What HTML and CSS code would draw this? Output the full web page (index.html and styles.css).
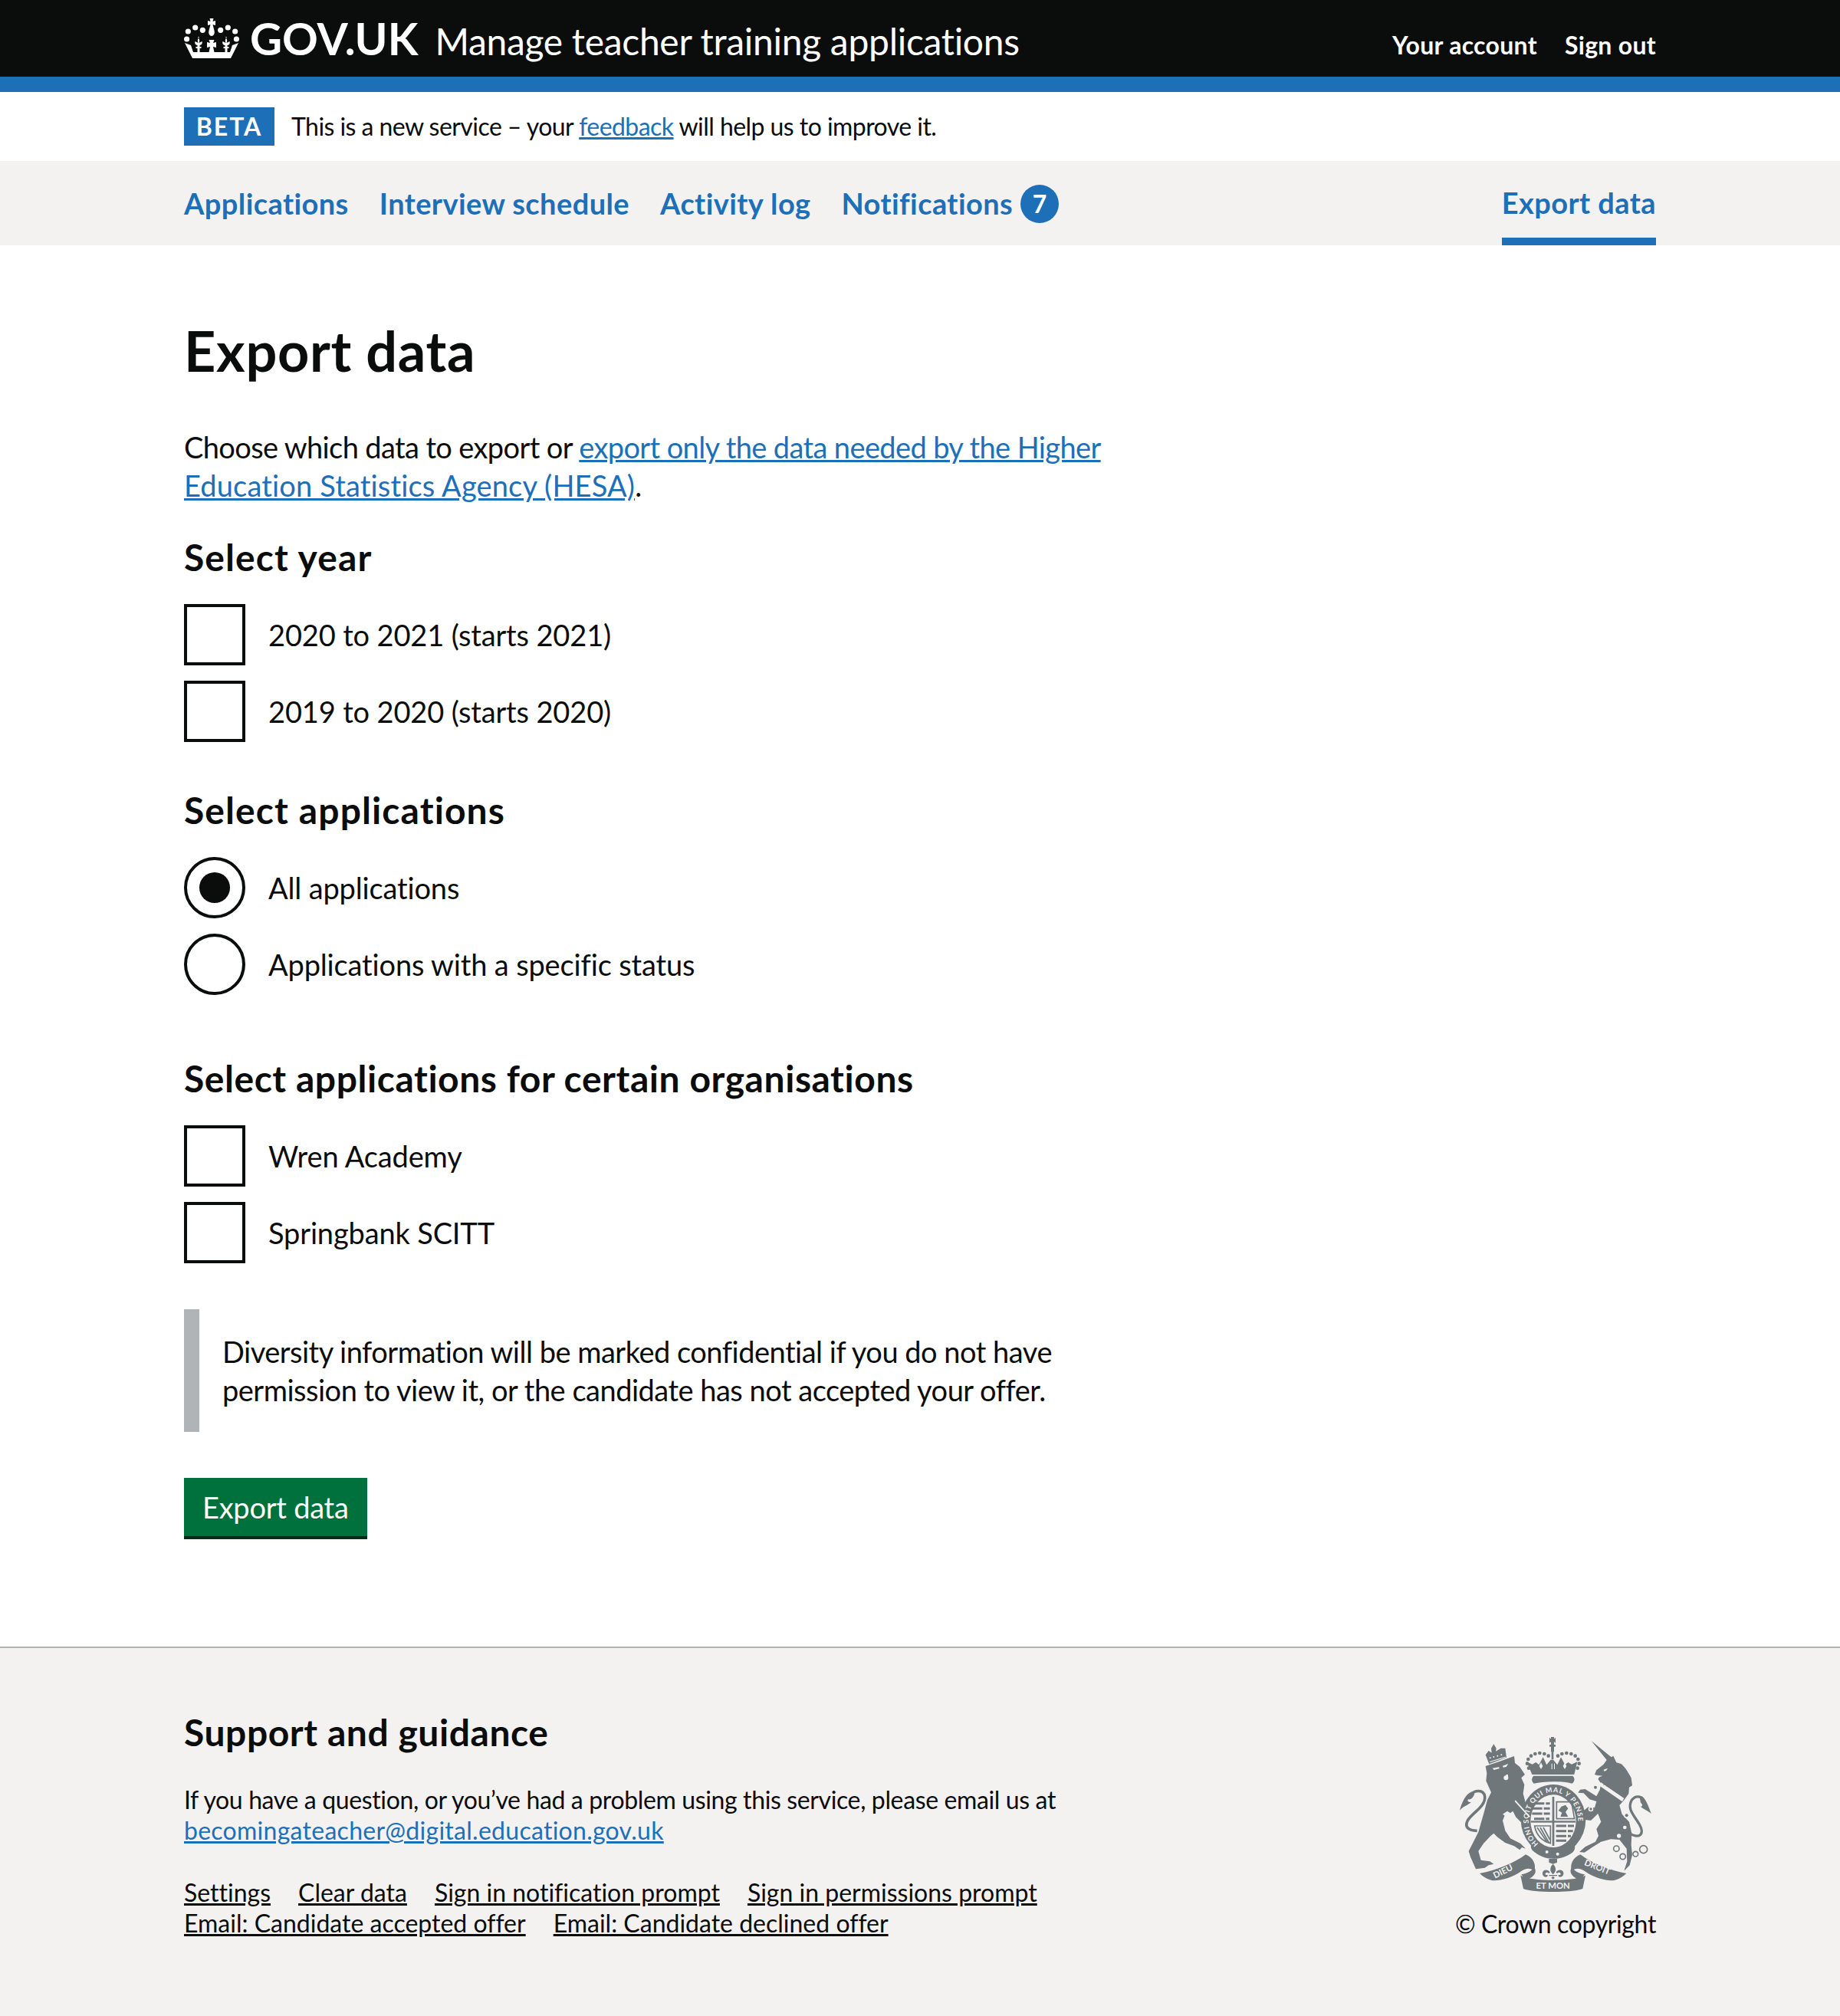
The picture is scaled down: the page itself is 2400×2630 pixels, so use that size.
FILE: index.html
```html
<!DOCTYPE html>
<html lang="en">
<head>
    <meta charset="UTF-8">
    <title>Export data - Manage teacher training applications - GOV.UK</title>
    <link rel="stylesheet" href="styles.css">
</head>
<body>
<!-- Header -->
<header class="header">
    <div class="width-container header-inner">
        <a class="logo" href="#">
            <svg class="logo-crown" viewBox="0 0 72 52" aria-hidden="true">
                <defs>
                    <path id="fleur" d="M0 24c2 3 3 5 1.500 8l4-2c1 3-1 5-3 5v2h2v2h-2v5h-3v-5h-2v-2h2v-2c-2 0-4-2-3-5l4 2c-1.500-3-.5-5 1.500-8z"/>
                </defs>
                <g fill="#fff">
                    <path d="M33.500 0h5l-1 4 3.500-1v6l-3.500-1 2 8c1 4-1 7-3.500 7s-4.500-3-3.500-7l2-8-3.500 1V3l3.500 1z"/>
                    <circle cx="5.300" cy="17" r="3.600"/><circle cx="14.700" cy="12" r="3.600"/><circle cx="24.300" cy="15.300" r="3.600"/>
                    <circle cx="47.700" cy="15.300" r="3.600"/><circle cx="57.300" cy="12" r="3.600"/><circle cx="66.700" cy="17" r="3.600"/>
                    <circle cx="3.600" cy="27" r="3.600"/><circle cx="68.400" cy="27" r="3.600"/>
                    <path d="M1 32l8 3 3 9h48l3-9 8-3-10 20H11z"/>
                    <use href="#fleur" x="18"/><use href="#fleur" x="54"/>
                    <path d="M32.500 28h7l-1.500 4 4-1v7l-4-1 1.500 7h-7l1.500-7-4 1v-7l4 1z"/>
                </g>
            </svg>
            <span class="logo-text">GOV.UK</span>
        </a>
        <a class="service-name" href="#">Manage teacher training applications</a>
        <nav class="account-nav">
            <a href="#">Your account</a>
            <a href="#">Sign out</a>
        </nav>
    </div>
</header>

<!-- Phase banner -->
<div class="width-container phase-banner">
    <strong class="tag">BETA</strong>
    <span class="phase-text">This is a new service – your <a class="link" href="#">feedback</a> will help us to improve it.</span>
</div>

<!-- Primary navigation -->
<nav class="primary-nav">
    <div class="width-container primary-nav-inner">
        <a class="nav-item" href="#">Applications</a>
        <a class="nav-item" href="#">Interview schedule</a>
        <a class="nav-item" href="#">Activity log</a>
        <a class="nav-item" href="#">Notifications <span class="count">7</span></a>
        <a class="nav-item nav-item-current" href="#">Export data</a>
    </div>
</nav>

<main class="width-container main">
    <h1 class="heading-xl">Export data</h1>
    <p class="body intro">Choose which data to export or <a class="link" href="#">export only the data needed by the Higher <span class="intro-end">Education Statistics Agency (HESA)</span></a>.</p>

    <form>
        <fieldset class="group">
            <legend class="heading-m heading-loose">Select year</legend>
            <label class="choice"><span class="box"></span>2020 to 2021 (starts 2021)</label>
            <label class="choice"><span class="box"></span>2019 to 2020 (starts 2020)</label>
        </fieldset>

        <fieldset class="group group-wide">
            <legend class="heading-m heading-loose">Select applications</legend>
            <label class="choice"><span class="radio radio-checked"></span>All applications</label>
            <label class="choice"><span class="radio"></span>Applications with a specific status</label>
        </fieldset>

        <fieldset class="group">
            <legend class="heading-m">Select applications for certain organisations</legend>
            <label class="choice"><span class="box"></span>Wren Academy</label>
            <label class="choice"><span class="box"></span>Springbank SCITT</label>
        </fieldset>

        <div class="inset">Diversity information will be marked confidential if you do not have permission to view it, or the candidate has not accepted your offer.</div>

        <button class="button" type="button">Export data</button>
    </form>
</main>

<!-- Footer -->
<footer class="footer">
    <div class="width-container footer-inner">
        <div class="footer-meta">
            <h2 class="heading-m footer-heading">Support and guidance</h2>
            <p class="footer-text">If you have a question, or you’ve had a problem using this service, please email us at <a class="link" href="#">becomingateacher@digital.education.gov.uk</a></p>
            <ul class="footer-links">
                <li><a href="#">Settings</a></li>
                <li><a href="#">Clear data</a></li>
                <li><a href="#">Sign in notification prompt</a></li>
                <li><a href="#">Sign in permissions prompt</a></li>
                <li><a href="#">Email: Candidate accepted offer</a></li>
                <li><a href="#">Email: Candidate declined offer</a></li>
            </ul>
        </div>
        <div class="footer-crest">
            <svg class="crest" viewBox="0 0 810 660" aria-hidden="true">
                <defs>
                    <path id="ring-path" d="M335 436A97 112 0 1 1 451 436"/>
                </defs>
                <g fill="#6f777b">
                    <!-- lion -->
                    <path d="M128 132L180 115L240 93L243 120L262 135L282 165L268 178L280 205L275 240L288 288L312 370L290 375L255 340L235 320L205 320L195 345L205 385L225 415L265 435L285 455L270 450L262 460L240 445L205 432L175 410L160 395L148 405L120 435L100 465L110 500L145 505L160 515L140 520L125 530L90 535L70 490L62 465L80 430L100 390L120 320L135 265L150 235L130 190L133 160Z"/>
                    <path d="M142 124L128 88L140 72L152 80L150 62L160 46L170 62L168 74L188 62L205 62L210 98Z"/>
                    <path d="M75 232C50 240 35 275 27 305C45 285 60 285 72 272C62 275 55 270 60 262C70 265 80 255 85 240Z"/>
                    <path fill="none" stroke="#6f777b" stroke-width="11" d="M95 385C60 385 45 370 58 345C75 315 130 290 125 250C120 222 85 225 70 245"/>

                    <!-- unicorn -->
                    <path d="M542 33L620 97L628 92L640 118L660 124L675 140L684 154L698 178L702 208L690 215L688 240L668 268L652 285L662 320L690 350L700 395L698 440L702 480L692 520L670 542L682 505L680 455L652 420L618 418L580 428L545 450L515 470L495 468L518 448L558 428L570 405L562 378L580 350L568 318L540 345L518 342L505 312L530 292L555 295L562 270L535 262L512 238L490 236L498 224L518 222L562 250L575 225L580 200L568 182L576 172L555 165L562 148L590 125L602 108Z"/>
                    <path d="M730 248C755 250 765 290 777 318C760 305 745 300 735 290C745 290 742 280 735 275Z"/>
                    <path fill="none" stroke="#6f777b" stroke-width="10" d="M690 395C735 420 750 395 730 360C710 325 680 300 700 265C715 245 735 250 745 262"/>
                    <g fill="none" stroke="#6f777b" stroke-width="5">
                        <circle cx="640" cy="455" r="11"/><circle cx="665" cy="486" r="11"/><circle cx="715" cy="476" r="10"/><circle cx="746" cy="458" r="15"/>
                    </g>

                    <!-- crown -->
                    <path d="M378 20l6 6v-8h12v8l6-6v22l-6-6v12h6v8h-6v20h-2v30h-8v-30h-2V56h-6v-8h6V36l-6 6z"/>
                    <path d="M310 165h165l12-50-22 10-14-8-12 10-16-30-14 30-16-20-10 0-16 20-14-30-16 30-12-10-14 8-22-10z"/>
                    <path d="M316 170h153c10 10 8 22-2 30-40-10-110-10-150 0-10-8-10-20-1-30z"/>
                    <g>
                        <circle cx="297" cy="140" r="7"/><circle cx="291" cy="122" r="7"/><circle cx="295" cy="105" r="7"/><circle cx="306" cy="92" r="7"/><circle cx="322" cy="84" r="7"/><circle cx="340" cy="81" r="7"/><circle cx="358" cy="84" r="7"/><circle cx="374" cy="92" r="7"/>
                        <circle cx="488" cy="140" r="7"/><circle cx="494" cy="122" r="7"/><circle cx="490" cy="105" r="7"/><circle cx="479" cy="92" r="7"/><circle cx="463" cy="84" r="7"/><circle cx="445" cy="81" r="7"/><circle cx="427" cy="84" r="7"/><circle cx="411" cy="92" r="7"/>
                    </g>

                    <!-- garter ring and shield -->
                    <ellipse cx="393" cy="342" rx="127" ry="138"/>
                    <ellipse cx="393" cy="347" rx="89" ry="103" fill="#f3f2f1"/>
                    <rect x="389" y="252" width="8" height="192"/>
                    <rect x="305" y="346" width="175" height="7"/>
                    <!-- quarters -->
                    <g stroke="#6f777b" stroke-width="9" stroke-dasharray="40 6">
                        <path d="M318 278h62M310 298h70M310 318h70M318 338h60"/>
                        <path d="M404 366h70M404 386h66M404 406h58M404 424h42"/>
                    </g>
                    <path d="M406 272h58l12 66h-70z" fill="none" stroke="#6f777b" stroke-width="5"/>
                    <path d="M425 290l16-6 10 14-10 14 10 18h-30l6-16-14-8z"/>
                    <path d="M320 366h62v68c-32-8-56-32-62-68z" fill="none" stroke="#6f777b" stroke-width="5"/>
                    <path d="M342 372l34 60M330 372l38 56M354 372l26 48" fill="none" stroke="#6f777b" stroke-width="5"/>
                    <!-- garter buckle -->
                    <path d="M322 470c-18-8-22-30-8-36 16 14 50 30 79 32 30-2 58-14 78-32 12 10 8 34-12 42-20 12-45 20-68 18-28 0-50-10-69-24z"/>

                    <!-- motto scroll -->
                    <path d="M105 552C170 540 240 512 285 478C315 490 328 520 318 542C305 530 285 530 265 545C230 570 170 585 150 578C135 575 118 565 105 552Z"/>
                    <path d="M679 552C614 540 544 512 499 478C469 490 456 520 466 542C479 530 499 530 519 545C554 570 614 585 634 578C649 575 666 565 679 552Z"/>
                    <path d="M265 560C290 572 335 578 392 578C449 578 494 572 519 560L508 612C470 628 314 628 276 612Z"/>
                    <path d="M318 528C336 552 306 572 285 578L268 556C292 552 308 542 318 528ZM466 528C448 552 478 572 499 578L516 556C492 552 476 542 466 528Z"/>
                    <!-- fleur on the scroll -->
                    <path d="M376 495h32v14l-16 6-16-6z"/>
                    <path d="M392 515c10 10 14 22 6 34l-6 7-6-7c-8-12-4-24 6-34z"/>
                    <path d="M380 548c-6-12-22-12-28-2-4 10 2 20 12 20 6 0 9-5 6-9-4 3-8 0-8-3 0-6 8-8 14-2zM404 548c6-12 22-12 28-2 4 10-2 20-12 20-6 0-9-5-6-9 4 3 8 0 8-3 0-6-8-8-14-2z"/>
                    <path d="M376 558h32v4h-32zM392 563l7 6-7 6-7-6z"/>
                </g>
                <g fill="#f3f2f1">
                    <!-- lion face and paw gaps -->
                    <circle cx="208" cy="178" r="9"/>
                    <path d="M155 140l25-4 3 5-22 6zM195 131l22-8-8 12-12 2zM208 165h8v14h-8z"/>
                    <path d="M245 265l58 65-5 2-56-62z"/>
                    <path d="M195 320l18-12 12 8 10-8 12 24-30 4z"/>
                    <!-- lion crown details -->
                    <circle cx="146" cy="100" r="3"/><circle cx="160" cy="96" r="3"/><circle cx="175" cy="92" r="3"/><circle cx="190" cy="88" r="3"/>
                    <path d="M144 114l62-19 1 3-62 19z"/>
                    <!-- unicorn face, collar, spots and loops -->
                    <path d="M590 146l16-6-6 10-8 2zM566 168l20 2-10 4z"/>
                    <path d="M580 196l90 62-7 13-92-64z"/>
                    <circle cx="680" cy="325" r="11"/><circle cx="558" cy="215" r="11"/><circle cx="540" cy="300" r="10"/>
                    <circle cx="673" cy="372" r="7"/><circle cx="650" cy="405" r="8"/>
                    <!-- crown details -->
                    <path d="M345 118l7 14-7 12-7-12zM438 118l7 14-7 12-7-12zM386 122h3v22h-3zM396 122h3v22h-3z"/>
                    <!-- buckle studs -->
                    <circle cx="368" cy="468" r="6"/><circle cx="410" cy="476" r="6"/>
                </g>
                <g fill="#6f777b">
                    <circle cx="680" cy="325" r="6"/><circle cx="558" cy="215" r="6"/><circle cx="540" cy="300" r="5"/>
                    <path d="M590 208l6-8 4 12 6-7 4 12 6-7 4 12 6-7 4 12 6-7 4 12 6-7 4 12-4 3-58-38z"/>
                </g>
                <g class="crest-text" fill="#f3f2f1">
                    <text class="ring-text"><textPath href="#ring-path">HONI SOIT QUI MAL Y PENSE</textPath></text>
                    <text transform="translate(165 572) rotate(-26)">DIEU</text>
                    <text x="392" y="612" text-anchor="middle">ET MON</text>
                    <text transform="translate(512 518) rotate(22)">DROIT</text>
                </g>
            </svg>
            <p class="footer-text copyright">© Crown copyright</p>
        </div>
    </div>
</footer>
</body>
</html>
```

FILE: styles.css
```css
* {
    box-sizing: border-box;
}

body {
    margin: 0;
    font-family: Lato, "Noto Sans", Arial, sans-serif;
    font-size: 38px;
    line-height: 50px;
    font-variant-ligatures: none;
    color: #0b0c0c;
    background: #fff;
}

.width-container {
    width: 1920px;
    margin: 0 auto;
}

a {
    color: inherit;
}

.link {
    color: #1d70b8;
}

/* Header */
.header {
    height: 120px;
    background: #0b0c0c;
    border-bottom: 20px solid #1d70b8;
    color: #fff;
}

.header-inner {
    display: flex;
    align-items: center;
    height: 100px;
}

.logo {
    display: flex;
    align-items: center;
    text-decoration: none;
    margin-right: 22px;
}

.logo-crown {
    width: 72px;
    height: 52px;
    margin-right: 14px;
}

.logo-text {
    font-size: 58px;
    font-weight: 700;
    line-height: 60px;
}

.service-name {
    font-size: 48px;
    letter-spacing: -0.3px;
    text-decoration: none;
    padding-top: 7px;
}

.account-nav {
    display: flex;
    gap: 36px;
    margin-left: auto;
    padding-top: 18px;
    font-size: 32px;
    font-weight: 700;
    letter-spacing: 0.3px;
}

.account-nav a {
    text-decoration: none;
}

/* Phase banner */
.phase-banner {
    display: flex;
    align-items: center;
    height: 90px;
    font-size: 32px;
}

.phase-text {
    letter-spacing: -0.55px;
}

.tag {
    width: 118px;
    height: 50px;
    margin-right: 22px;
    background: #1d70b8;
    color: #fff;
    font-size: 32px;
    letter-spacing: 2px;
    line-height: 50px;
    text-align: center;
}

/* Primary navigation */
.primary-nav {
    height: 110px;
    background: #f3f2f1;
}

.primary-nav-inner {
    display: flex;
    gap: 40px;
    height: 110px;
}

.nav-item {
    display: flex;
    align-items: center;
    gap: 10px;
    height: 110px;
    color: #1d70b8;
    font-weight: 700;
    font-size: 38px;
    letter-spacing: 0.42px;
    text-decoration: none;
}

.nav-item-current {
    margin-left: auto;
    border-bottom: 10px solid #1d70b8;
    padding-top: 8px;
}

.count {
    display: inline-block;
    width: 50px;
    height: 50px;
    margin-top: 2px;
    border-radius: 50%;
    background: #1d70b8;
    color: #fff;
    font-size: 32px;
    line-height: 50px;
    text-align: center;
}

/* Main content */
.main {
    padding-top: 97px;
    height: 1828px;
}

.heading-xl {
    margin: 0 0 61px;
    font-size: 72px;
    line-height: 80px;
    font-weight: 700;
    letter-spacing: 0.7px;
}

.body {
    margin: 0;
    width: 1260px;
}

.intro {
    margin-bottom: 39px;
    letter-spacing: -0.62px;
}

.intro-end {
    letter-spacing: 0.16px;
}

.heading-m {
    padding: 0;
    margin: 0 0 31px;
    font-size: 48px;
    line-height: 60px;
    font-weight: 700;
    letter-spacing: 0.55px;
}

.heading-loose {
    letter-spacing: 1.1px;
}

.group {
    border: 0;
    margin: 0 0 60px;
    padding: 0;
}

.group:first-child {
    margin-bottom: 59px;
}

.group-wide {
    margin-bottom: 79px;
}

.choice {
    display: flex;
    align-items: center;
    height: 80px;
    margin-bottom: 20px;
    letter-spacing: -0.15px;
}

.choice:last-child {
    margin-bottom: 0;
}

.box,
.radio {
    flex: none;
    width: 80px;
    height: 80px;
    margin-right: 30px;
    border: 4px solid #0b0c0c;
    background: #fff;
}

.radio {
    border-radius: 50%;
    display: flex;
    align-items: center;
    justify-content: center;
}

.radio-checked::after {
    content: "";
    width: 40px;
    height: 40px;
    border-radius: 50%;
    background: #0b0c0c;
}

.inset {
    width: 1260px;
    margin-bottom: 60px;
    padding: 30px;
    border-left: 20px solid #b1b4b6;
    letter-spacing: -0.5px;
}

.button {
    display: block;
    height: 80px;
    padding: 0 24px 4px;
    border: 0;
    background: #00703c;
    box-shadow: inset 0 -4px 0 #002d18;
    color: #fff;
    font-family: inherit;
    font-size: 38px;
    line-height: 76px;
    letter-spacing: -0.25px;
}

/* Footer */
.footer {
    height: 482px;
    padding-top: 80px;
    background: #f3f2f1;
    border-top: 2px solid #b1b4b6;
}

.footer-inner {
    display: flex;
    justify-content: space-between;
}

.footer-meta {
    width: 1260px;
    flex: none;
}

.footer-heading {
    margin-bottom: 38px;
}

.footer-text {
    margin: 0;
    font-size: 32px;
    line-height: 40px;
    letter-spacing: -0.37px;
}

.footer-text .link {
    letter-spacing: 0.27px;
}

.footer-links {
    display: flex;
    flex-wrap: wrap;
    column-gap: 36px;
    margin: 41px 0 0;
    padding: 0;
    list-style: none;
    font-size: 32px;
    line-height: 40px;
}

.footer-crest {
    display: flex;
    flex-direction: column;
    align-items: flex-end;
    padding-top: 30px;
}

.crest {
    width: 270px;
    height: 220px;
    margin: 0 -5px 10px 0;
}

.crest-text {
    font-size: 34px;
    font-weight: 700;
}

.ring-text {
    font-size: 27px;
    letter-spacing: 2.5px;
}
```
